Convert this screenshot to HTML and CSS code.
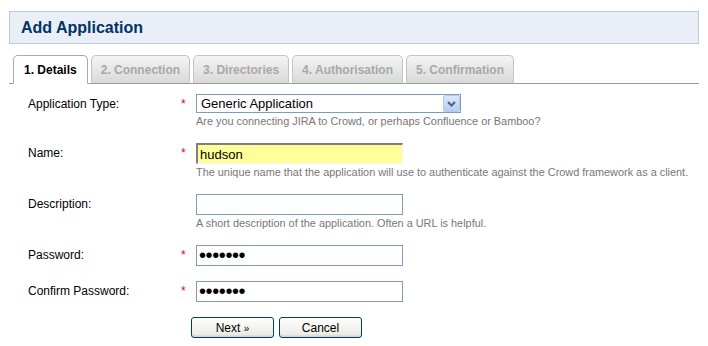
FILE: index.html
```html
<!DOCTYPE html>
<html lang="en">
<head>
    <meta charset="UTF-8">
    <title>Add Application</title>
    <link rel="stylesheet" href="styles.css">
</head>
<body>
    <div class="page">
        <!-- Title -->
        <h1 class="page-title">Add Application</h1>

        <!-- Wizard steps -->
        <ul class="tabs">
            <li class="tab active">1. Details</li>
            <li class="tab">2. Connection</li>
            <li class="tab">3. Directories</li>
            <li class="tab">4. Authorisation</li>
            <li class="tab">5. Confirmation</li>
        </ul>

        <!-- Form -->
        <form class="app-form">
            <div class="row">
                <label class="label">Application Type:</label>
                <span class="req">*</span>
                <div class="field">
                    <div class="select-box">
                        <select class="select">
                            <option>Generic Application</option>
                        </select>
                        <span class="select-btn">
                            <svg width="9" height="6" viewBox="0 0 9 6"><path d="M1 1 L4.5 4.5 L8 1" fill="none" stroke="#4d6185" stroke-width="2"/></svg>
                        </span>
                    </div>
                    <p class="help">Are you connecting JIRA to Crowd, or perhaps Confluence or Bamboo?</p>
                </div>
            </div>

            <div class="row">
                <label class="label">Name:</label>
                <span class="req">*</span>
                <div class="field">
                    <input type="text" class="input focused" value="hudson">
                    <p class="help">The unique name that the application will use to authenticate against the Crowd framework as a client.</p>
                </div>
            </div>

            <div class="row">
                <label class="label">Description:</label>
                <span class="req"></span>
                <div class="field">
                    <input type="text" class="input">
                    <p class="help">A short description of the application. Often a URL is helpful.</p>
                </div>
            </div>

            <div class="row">
                <label class="label">Password:</label>
                <span class="req">*</span>
                <div class="field">
                    <input type="password" class="input" value="secret1">
                </div>
            </div>

            <div class="row">
                <label class="label">Confirm Password:</label>
                <span class="req">*</span>
                <div class="field">
                    <input type="password" class="input" value="secret1">
                </div>
            </div>

            <div class="actions">
                <button type="button" class="btn">Next <span class="raquo">&raquo;</span></button>
                <button type="button" class="btn">Cancel</button>
            </div>
        </form>
    </div>
</body>
</html>
```

FILE: styles.css
```css
/* Basic Reset */
* {
    margin: 0;
    padding: 0;
    box-sizing: border-box;
}

body {
    font-family: "Liberation Sans", Arial, sans-serif;
    font-size: 12px;
    color: #000;
    background-color: #fff;
}

.page {
    width: 690px;
    margin: 11px 9px;
}

/* Title bar */
.page-title {
    height: 33px;
    padding: 0 11px;
    line-height: 31px;
    font-size: 16px;
    font-weight: bold;
    color: #003366;
    background-color: #eaeff7;
    border: 1px solid #b8cbe0;
}

/* Wizard tabs */
.tabs {
    list-style: none;
    display: flex;
    gap: 3px;
    margin-top: 11px;
    padding-left: 4px;
    border-bottom: 1px solid #999;
}

.tab {
    height: 29px;
    margin-bottom: -1px;
    padding: 0 9px;
    line-height: 28px;
    font-weight: bold;
    color: #a8a8a8;
    background: linear-gradient(#f4f4f4, #d9d9d9);
    border: 1px solid #c4c4c4;
    border-bottom-color: #999;
    border-radius: 5px 5px 0 0;
}

.tab.active {
    padding: 0 10px;
    color: #000;
    background: #fff;
    border-color: #aaa;
    border-bottom-color: #fff;
}

/* Form rows */
.app-form {
    margin-top: 10px;
    padding-left: 19px;
}

.row {
    display: grid;
    grid-template-columns: 152px 16px 1fr;
    margin-bottom: 15px;
}

.label,
.req {
    line-height: 21px;
}

.req {
    color: #e00;
    padding-left: 1px;
}

.help {
    margin-top: 1px;
    font-size: 10.9px;
    line-height: 14px;
    color: #777;
}

.input {
    display: block;
    width: 207px;
    height: 21px;
    padding: 0 3px;
    font-family: "Liberation Sans", Arial, sans-serif;
    font-size: 13px;
    border: 1px solid #7f9db9;
    background: #fff;
    outline: none;
}

.input[type="password"] {
    font-size: 20px;
    letter-spacing: -0.4px;
    padding-left: 2px;
}

.input.focused {
    background: #ffff99;
    border-top: 2px solid #7f7f7f;
    border-left: 2px solid #7f7f7f;
    border-right: 1px solid #f4f4f4;
    border-bottom: 1px solid #f4f4f4;
    padding-left: 2px;
}

/* Select with xp style button */
.select-box {
    position: relative;
    width: 265px;
    height: 19px;
}

.select {
    appearance: none;
    -webkit-appearance: none;
    width: 100%;
    height: 100%;
    padding: 0 20px 0 4px;
    font-family: "Liberation Sans", Arial, sans-serif;
    font-size: 13px;
    color: #000;
    background: #fff;
    border: 1px solid #7f9db9;
    border-radius: 0;
    outline: none;
}

.select-btn {
    position: absolute;
    top: 1px;
    right: 1px;
    width: 17px;
    height: 17px;
    display: flex;
    align-items: center;
    justify-content: center;
    background: linear-gradient(#dce7fb, #b9cdf3);
    border: 1px solid #b7c9ee;
    border-radius: 2px;
}

/* Buttons */
.actions {
    display: flex;
    gap: 5px;
    margin-left: 163px;
    margin-top: 1px;
}

.btn {
    width: 83px;
    height: 21px;
    font-family: "Liberation Sans", Arial, sans-serif;
    font-size: 12px;
    color: #000;
    background: linear-gradient(#ffffff, #ecebe6 85%, #d6d0c5);
    border: 1px solid #003c74;
    border-radius: 3px;
}

.raquo {
    font-size: 10px;
}
```
